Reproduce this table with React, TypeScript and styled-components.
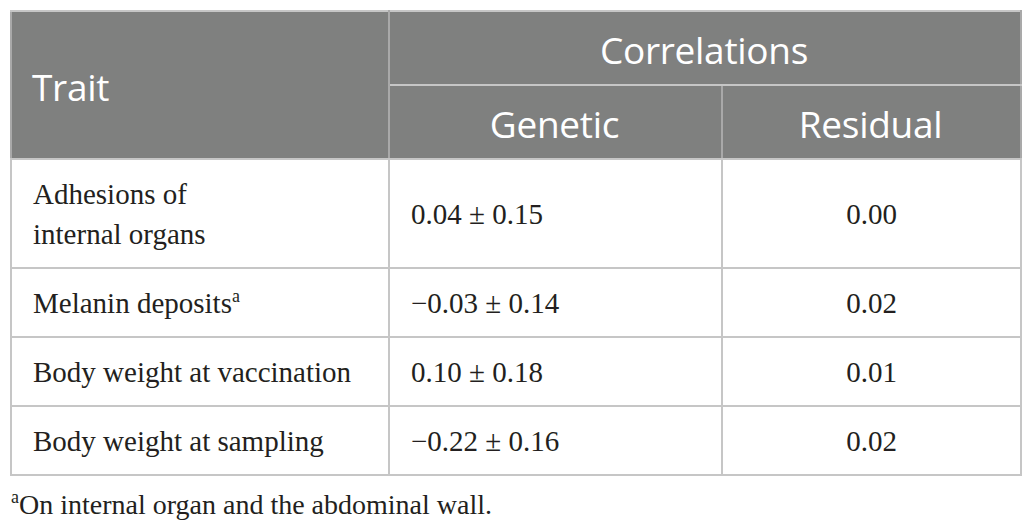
import React from "react";
import styled, { createGlobalStyle } from "styled-components";

const Global = createGlobalStyle`
  html, body { margin: 0; padding: 0; background: #ffffff; }
  body { padding: 10px 0 0 10px; }
`;

const Table = styled.table`
  border-collapse: collapse;
  width: 1010px;
  table-layout: fixed;
  border: 2px solid #c6c6c6;
`;

const HeadCell = styled.th<{ $align?: string; $h: number }>`
  background: #7f807f;
  color: #ffffff;
  font-family: "Open Sans", "Liberation Sans", sans-serif;
  font-weight: 400;
  font-size: 37px;
  letter-spacing: -0.3px;
  height: ${(p) => p.$h}px;
  padding: 2px 22px 0 20px;
  box-sizing: border-box;
  text-align: ${(p) => p.$align || "center"};
  vertical-align: middle;
  border: 2px solid #a9a9a9;
  border-top-color: #c6c6c6;
  border-bottom-color: #c6c6c6;
`;

const Cell = styled.td<{ $align?: string }>`
  font-family: "Liberation Serif", "Times New Roman", serif;
  font-size: 29px;
  line-height: 40px;
  color: #231f20;
  padding: 14px 21px 13px 21px;
  text-align: ${(p) => p.$align || "left"};
  vertical-align: middle;
  border: 2px solid #c6c6c6;
`;

const Sup = styled.sup`
  font-size: 18px;
  line-height: 0;
  vertical-align: 11px;
`;

const Footnote = styled.p`
  margin: 9px 0 0 1px;
  font-family: "Liberation Serif", "Times New Roman", serif;
  font-size: 28px;
  line-height: 40px;
  color: #231f20;
`;

const rows: { trait: React.ReactNode; g: string; r: string }[] = [
  { trait: <>Adhesions of<br />internal organs</>, g: "0.04 ± 0.15", r: "0.00" },
  { trait: <>Melanin deposits<Sup>a</Sup></>, g: "−0.03 ± 0.14", r: "0.02" },
  { trait: "Body weight at vaccination", g: "0.10 ± 0.18", r: "0.01" },
  { trait: "Body weight at sampling", g: "−0.22 ± 0.16", r: "0.02" },
];

export default function App() {
  return (
    <>
      <Global />
      <Table>
        <colgroup>
          <col style={{ width: 378 }} />
          <col style={{ width: 333 }} />
          <col style={{ width: 299 }} />
        </colgroup>
        <thead>
          <tr>
            <HeadCell rowSpan={2} $align="left" $h={74}>Trait</HeadCell>
            <HeadCell colSpan={2} $h={74}>Correlations</HeadCell>
          </tr>
          <tr>
            <HeadCell $h={74}>Genetic</HeadCell>
            <HeadCell $h={74}>Residual</HeadCell>
          </tr>
        </thead>
        <tbody>
          {rows.map((row, i) => (
            <tr key={i}>
              <Cell>{row.trait}</Cell>
              <Cell>{row.g}</Cell>
              <Cell $align="center">{row.r}</Cell>
            </tr>
          ))}
        </tbody>
      </Table>
      <Footnote>
        <Sup>a</Sup>On internal organ and the abdominal wall.
      </Footnote>
    </>
  );
}
